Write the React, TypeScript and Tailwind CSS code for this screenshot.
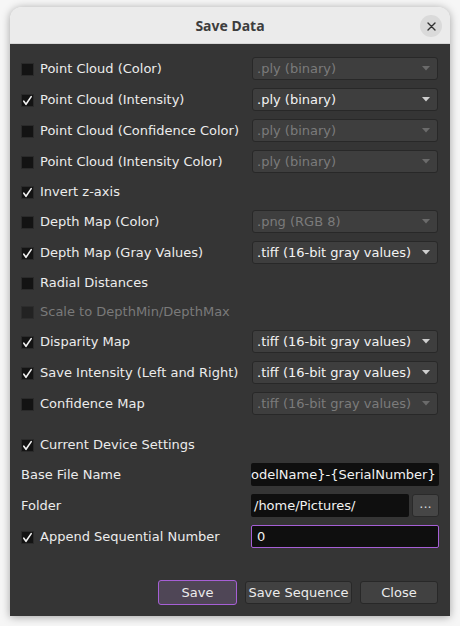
import { useState } from "react";

type Row = {
  label: string;
  checked: boolean;
  disabled?: boolean;
  format?: string;
};

const rows: Row[] = [
  { label: "Point Cloud (Color)", checked: false, format: ".ply (binary)" },
  { label: "Point Cloud (Intensity)", checked: true, format: ".ply (binary)" },
  { label: "Point Cloud (Confidence Color)", checked: false, format: ".ply (binary)" },
  { label: "Point Cloud (Intensity Color)", checked: false, format: ".ply (binary)" },
  { label: "Invert z-axis", checked: true },
  { label: "Depth Map (Color)", checked: false, format: ".png (RGB 8)" },
  { label: "Depth Map (Gray Values)", checked: true, format: ".tiff (16-bit gray values)" },
  { label: "Radial Distances", checked: false },
  { label: "Scale to DepthMin/DepthMax", checked: false, disabled: true },
  { label: "Disparity Map", checked: true, format: ".tiff (16-bit gray values)" },
  { label: "Save Intensity (Left and Right)", checked: true, format: ".tiff (16-bit gray values)" },
  { label: "Confidence Map", checked: false, format: ".tiff (16-bit gray values)" },
];

function CheckBox({ checked, disabled }: { checked: boolean; disabled?: boolean }) {
  return (
    <span
      className={
        "flex h-[13px] w-[13px] shrink-0 items-center justify-center border " +
        (disabled ? "border-[#2c2c2c] bg-[#222222]" : "border-[#2a2a2a] bg-[#131313]")
      }
    >
      {checked && (
        <svg width="11" height="11" viewBox="0 0 11 11" fill="none">
          <path d="M1.8 6.2 L4 9.3 L9.2 1.6" stroke="#f2f2f2" strokeWidth="1.6" strokeLinecap="round" strokeLinejoin="round" />
        </svg>
      )}
    </span>
  );
}

function CheckLabel({ row, onToggle }: { row: Row; onToggle: () => void }) {
  return (
    <button
      type="button"
      onClick={onToggle}
      disabled={row.disabled}
      className="flex h-[21px] items-center gap-[6px] pt-[1px] text-left"
    >
      <CheckBox checked={row.checked} disabled={row.disabled} />
      <span className={row.disabled ? "text-[#7a7a7a]" : "text-[#ececec]"}>{row.label}</span>
    </button>
  );
}

function Combo({ value, enabled }: { value: string; enabled: boolean }) {
  return (
    <div
      className={
        "mx-[1px] flex h-[23px] items-center justify-between rounded-[3px] border border-[#282828] bg-[#3e3e3e] pl-[4px] pr-[7px] " +
        (enabled ? "text-[#f2f2f2]" : "text-[#7b7b7b]")
      }
    >
      <span className="whitespace-nowrap">{value}</span>
      <svg width="8" height="5" viewBox="0 0 8 5">
        <path d="M0 0 H8 L4 4.5 Z" fill={enabled ? "#cfcfcf" : "#6b6b6b"} />
      </svg>
    </div>
  );
}

export default function App() {
  const [items, setItems] = useState<Row[]>(rows);
  const [useDevice, setUseDevice] = useState(true);
  const [appendNumber, setAppendNumber] = useState(true);

  const toggle = (idx: number) =>
    setItems(items.map((r, i) => (i === idx ? { ...r, checked: !r.checked } : r)));

  return (
    <div className="min-h-screen bg-[#f6f6f6] px-[10px] pt-[7px] font-['DejaVu_Sans',sans-serif] text-[13px]">
      <div className="w-[440px] overflow-hidden rounded-t-[12px] shadow-[0_1px_8px_rgba(0,0,0,0.35)]">
        {/* Title bar */}
        <div className="relative flex h-[37px] items-center justify-center border-b border-[#d6d6d6] bg-[#ebebeb]">
          <span className="font-['Noto_Sans',sans-serif] text-[14px] font-bold text-[#3d3d3d]">Save Data</span>
          <button
            type="button"
            className="absolute right-[8px] top-[8px] flex h-[22px] w-[22px] items-center justify-center rounded-full bg-[#dadada]"
          >
            <svg width="9" height="9" viewBox="0 0 9 9">
              <path d="M1 1 L8 8 M8 1 L1 8" stroke="#333333" strokeWidth="1.4" strokeLinecap="round" />
            </svg>
          </button>
        </div>

        {/* Body */}
        <div className="bg-[#353535] px-[11px] pb-[11px] pt-[13px]">
          <div className="grid grid-cols-[230px_188px] items-center gap-y-[8px]">
            {items.map((row, idx) => (
              <div key={row.label} className="contents">
                <CheckLabel row={row} onToggle={() => toggle(idx)} />
                {row.format ? <Combo value={row.format} enabled={row.checked} /> : <div />}
              </div>
            ))}

            <div className="col-span-2 h-[3px]" />

            <CheckLabel
              row={{ label: "Current Device Settings", checked: useDevice }}
              onToggle={() => setUseDevice(!useDevice)}
            />
            <div />

            <span className="pt-[1px] text-[#ececec]">Base File Name</span>
            {/* field is scrolled to its end, so the start of the name is out of view */}
            <div className="flex h-[23px] items-center overflow-hidden rounded-[2px] bg-[#0f0f0f] pt-[1px] text-[#f2f2f2]">
              <span className="whitespace-nowrap">{"odelName}-{SerialNumber}"}</span>
            </div>

            <span className="pt-[1px] text-[#ececec]">Folder</span>
            <div className="flex h-[23px] gap-[3px]">
              <div className="flex flex-1 items-center rounded-[2px] bg-[#0f0f0f] pl-[3px] pt-[1px] text-[#f2f2f2]">
                /home/Pictures/
              </div>
              <button
                type="button"
                className="flex w-[27px] items-center justify-center rounded-[3px] border border-[#2a2a2a] bg-[#464646] pb-[4px] text-[#d8d8d8]"
              >
                ...
              </button>
            </div>

            <CheckLabel
              row={{ label: "Append Sequential Number", checked: appendNumber }}
              onToggle={() => setAppendNumber(!appendNumber)}
            />
            <div className="flex h-[23px] items-center rounded-[2px] border border-[#a65fd6] bg-[#0f0f0f] pl-[5px] pt-[1px] text-[#f2f2f2]">
              0
            </div>
          </div>

          {/* Dialog buttons */}
          <div className="mr-[1px] mt-[32px] flex items-center justify-end gap-[8px] text-[#ececec]">
            <button
              type="button"
              className="h-[25px] w-[79px] rounded-[3px] border border-[#a65fd6] bg-[#4f4656]"
            >
              Save
            </button>
            <button
              type="button"
              className="h-[23px] w-[107px] rounded-[3px] border border-[#282828] bg-[#414141]"
            >
              Save Sequence
            </button>
            <button
              type="button"
              className="h-[23px] w-[78px] rounded-[3px] border border-[#282828] bg-[#414141]"
            >
              Close
            </button>
          </div>
        </div>
      </div>
    </div>
  );
}
